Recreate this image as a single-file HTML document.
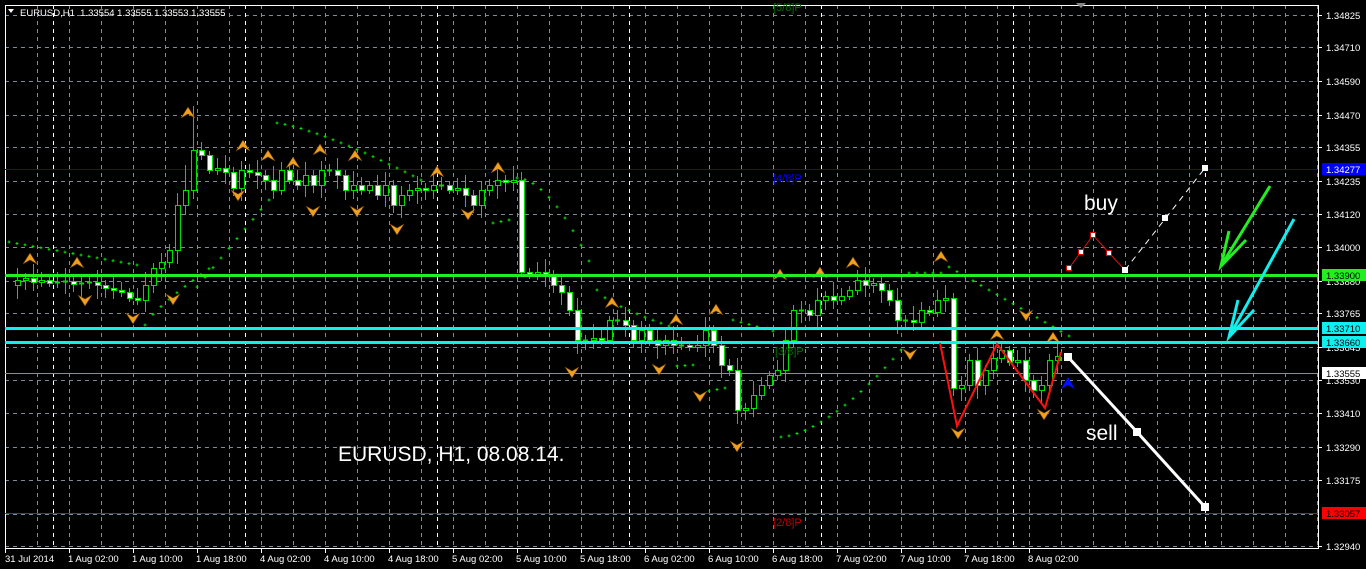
<!DOCTYPE html>
<html><head><meta charset="utf-8">
<style>
html,body{margin:0;padding:0;background:#000;width:1366px;height:569px;overflow:hidden}
svg{display:block}
text{font-family:"Liberation Sans",sans-serif}
</style></head>
<body>
<svg id="s" width="1366" height="569" xmlns="http://www.w3.org/2000/svg"></svg>
<script>
var o=[];
function L(x1,y1,x2,y2,c,w,d){o.push('<line x1="'+x1+'" y1="'+y1+'" x2="'+x2+'" y2="'+y2+'" stroke="'+c+'" stroke-width="'+(w||1)+'"'+(d?' stroke-dasharray="'+d+'"':'')+'/>');}
function R(x,y,w,h,f,s){o.push('<rect x="'+x+'" y="'+y+'" width="'+w+'" height="'+h+'" fill="'+f+'"'+(s?' stroke="'+s+'"':'')+'/>');}
function T(x,y,t,c,sz,a){o.push('<text x="'+x+'" y="'+y+'" fill="'+c+'" font-size="'+sz+'"'+(a?' '+a:'')+'>'+t+'</text>');}
R(0,0,1366,569,'#000');
var gy=[15,47,81,115,147,181,214,247,281,313,347,380,413,447,480,514,546];
gy.forEach(function(y){L(5,y+.5,1318,y+.5,'#7f8a96',1,'4 4');});
for(var x=37;x<1318;x+=32)L(x+.5,5,x+.5,548,'#7f8a96',1,'4 4');
[53,245,437,629,821,1013,1205].forEach(function(x){L(x+.5,5,x+.5,548,'#fff',1,'4 4');});
o.push('<rect x="5.5" y="5.5" width="1313" height="543" fill="none" stroke="#fff"/>');
L(5,169.5,1318,169.5,'#0000ff');L(5,513.5,1318,513.5,'#e00000');L(5,373.5,1318,373.5,'#8a8f96');
var c=[285,280,278,282,280,283,282,281,284,283,282,285,288,290,292,298,300,285,268,262,250,205,190,150,155,170,168,172,188,170,172,175,180,190,170,180,185,175,185,170,170,175,190,185,190,185,195,185,205,195,190,188,190,185,185,190,188,195,205,190,185,180,182,180,272,275,272,275,285,292,310,340,340,338,340,320,320,325,340,330,340,345,340,345,345,347,345,330,345,365,370,410,408,395,385,375,370,340,310,310,315,300,296,300,296,290,280,285,283,290,300,320,320,322,310,312,300,298,388,385,360,385,370,358,350,362,360,380,390,385,360,356];
var wk=[6,12,5,14,8,4,10,13,5,9];
for(var i=1;i<c.length;i++){var x=9+8*i,op=c[i-1],cl=c[i];var t=Math.min(op,cl),b=Math.max(op,cl);
var hi=t-wk[i%10]-(i==23?30:0)-(i==22?20:0),lo=b+wk[(i*3)%10];
L(x+.5,hi,x+.5,lo,'#00e000');
if(b-t<2){L(x-2,t+.5,x+3,t+.5,'#00e000',2);}else R(x-2+.5,t+.5,5,b-t,cl>op?'#fff':'#000','#00e000');}
function dots(x0,y0,x1,y1,p){for(var x=x0;x<=x1;x+=8){var f=(x-x0)/(x1-x0||1);var y=y0+(y1-y0)*Math.pow(f,p||1);o.push('<path d="M'+(x-1.5)+' '+y+'h3M'+x+' '+(y-1.5)+'v3" stroke="#00e000"/>');}}
dots(9,242,137,265,1);dots(145,325,213,266,0.8);dots(197,287,269,200,1);dots(277,123,421,180,1.3);dots(493,223,509,220,1);dots(517,178,589,261,1.8);dots(597,290,669,326,0.7);dots(677,366,693,365);dots(709,391,725,388);dots(733,320,773,331);dots(781,437,901,350,1.6);dots(909,273,941,273);dots(949,267,1069,336);
function up(x,y){o.push('<path d="M'+(x-7)+' '+(y+5)+'L'+x+' '+(y-6)+'L'+(x+7)+' '+(y+5)+'L'+x+' '+(y+1)+'Z" fill="#f0a020" stroke="#704000" stroke-width=".6"/>');}
function dn(x,y){o.push('<path d="M'+(x-7)+' '+(y-5)+'L'+x+' '+(y+6)+'L'+(x+7)+' '+(y-5)+'L'+x+' '+(y-1)+'Z" fill="#f0a020" stroke="#704000" stroke-width=".6"/>');}
[[188,113],[30,259],[77,263],[243,146],[268,156],[293,163],[320,150],[355,156],[437,172],[498,168],[612,303],[676,320],[716,310],[780,275],[820,273],[853,263],[941,257],[997,335],[1053,338]].forEach(function(p){up(p[0],p[1]);});
[[85,300],[133,318],[173,299],[238,195],[313,211],[357,211],[397,229],[468,214],[572,372],[659,369],[700,396],[737,446],[910,354],[958,433],[1044,414],[1026,315]].forEach(function(p){dn(p[0],p[1]);});
o.push('<path d="M1061 389L1068 377L1075 389L1068 385Z" fill="#0010ff"/>');
L(5,275.5,1318,275.5,'#22ee22',3);L(5,328.5,1318,328.5,'#11eeee',3);L(5,342.5,1318,342.5,'#11eeee',3);
o.push('<polyline points="940,343 957,426 997,344 1045,408 1061,352" fill="none" stroke="#ff1010" stroke-width="2"/>');
o.push('<polyline points="1069,268 1081,252 1093,235 1109,253 1125,270" fill="none" stroke="#e01010"/>');
L(1125,270,1205,168,'#fff',1,'6 5');
[[1069,268],[1081,252],[1093,235],[1109,253]].forEach(function(p){R(p[0]-2.5,p[1]-2.5,5,5,'#fff','#e00000');});
[[1125,270],[1165,218],[1205,168]].forEach(function(p){R(p[0]-3,p[1]-3,6,6,'#fff');});
o.push('<polyline points="1068,357 1137,432 1205,507" fill="none" stroke="#fff" stroke-width="3"/>');
[[1068,357],[1137,432],[1205,507]].forEach(function(p){R(p[0]-4,p[1]-4,8,8,'#fff');});
o.push('<path d="M1270 186L1221 266M1229 231L1221 266L1246 240" fill="none" stroke="#22ee22" stroke-width="3"/>');
o.push('<path d="M1294 219L1229 337M1238 300L1229 337L1254 310" fill="none" stroke="#11eeee" stroke-width="3"/>');
T(1084,210,'buy','#fff',21);T(1086,440,'sell','#fff',21);T(338,461,'EURUSD, H1, 08.08.14.','#fff',21);
T(773,11,'[5/8]P','#007000',11);T(773,182,'[4/8]P','#0000ff',11);T(775,355,'[3/8]P','#007000',11);T(773,526,'[2/8]P','#c00000',11);
o.push('<path d="M1076 3L1086 3L1081 8Z" fill="#888"/>');
o.push('<path d="M8 9L14 9L11 13Z" fill="#fff"/>');
T(20,16,'EURUSD,H1&#160; 1.33554 1.33555 1.33553 1.33555','#fff',9.5);
var pl=[[15,'1.34825'],[47,'1.34710'],[81,'1.34590'],[115,'1.34470'],[147,'1.34355'],[181,'1.34235'],[214,'1.34120'],[247,'1.34000'],[281,'1.33880'],[313,'1.33765'],[347,'1.33645'],[380,'1.33530'],[413,'1.33410'],[447,'1.33290'],[480,'1.33175'],[546,'1.32940']];
pl.forEach(function(p){L(1318,p[0]+.5,1322,p[0]+.5,'#fff');T(1326,p[0]+4,p[1],'#fff',9.5);});
function box(y,t,bg,fg){R(1322,y-6,44,12,bg);T(1326,y+4,t,fg,9.5);}
box(169,'1.34277','#0000ff','#fff');box(275,'1.33900','#22ee22','#000');box(328,'1.33710','#11eeee','#000');box(342,'1.33660','#11eeee','#000');box(373,'1.33555','#fff','#000');box(513,'1.33057','#ff0000','#000');
var tl=['31 Jul 2014','1 Aug 02:00','1 Aug 10:00','1 Aug 18:00','4 Aug 02:00','4 Aug 10:00','4 Aug 18:00','5 Aug 02:00','5 Aug 10:00','5 Aug 18:00','6 Aug 02:00','6 Aug 10:00','6 Aug 18:00','7 Aug 02:00','7 Aug 10:00','7 Aug 18:00','8 Aug 02:00'];
tl.forEach(function(t,i){var x=5+64*i;L(x+.5,548,x+.5,553,'#fff');T(x+(i?-1:0),562,t,'#fff',9.5);});
document.getElementById('s').innerHTML=o.join('');
</script>
</body></html>
